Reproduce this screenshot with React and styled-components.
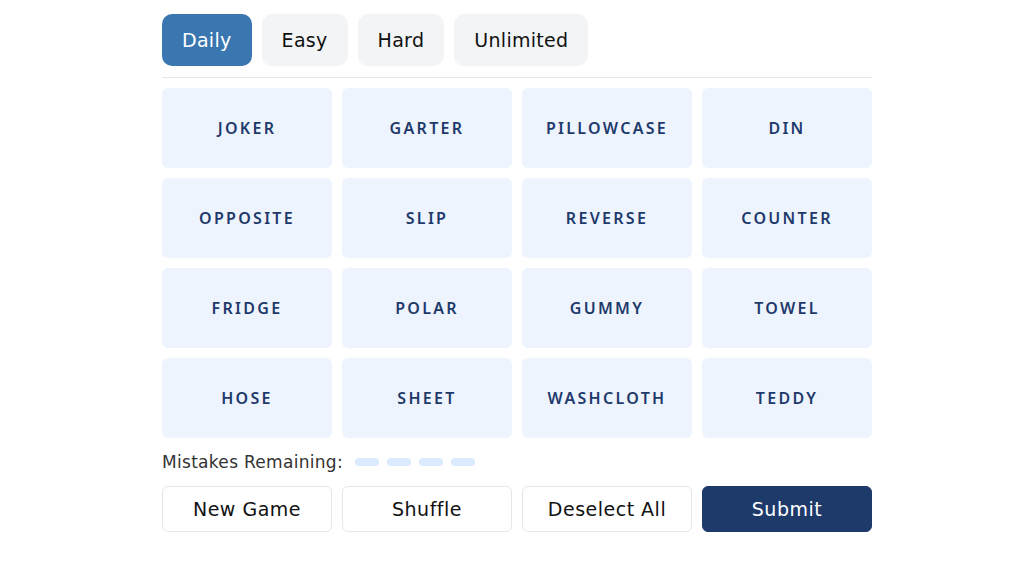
import React, { useState } from "react";
import styled, { createGlobalStyle } from "styled-components";

const GlobalStyle = createGlobalStyle`
  html, body {
    margin: 0;
    padding: 0;
    background: #ffffff;
  }
  body {
    font-family: "DejaVu Sans", "Noto Sans", sans-serif;
  }
`;

const Page = styled.div`
  width: 710px;
  margin-left: calc(50% - 352.5px);
  padding-top: 14px;
`;

const Tabs = styled.div`
  display: flex;
  gap: 10px;
  padding-bottom: 11px;
  border-bottom: 1px solid #e5e7eb;
`;

const Tab = styled.button`
  height: 52px;
  padding: 0 20px;
  border: none;
  border-radius: 10px;
  font-family: inherit;
  font-size: 19px;
  font-weight: 400;
  letter-spacing: 0.3px;
  cursor: pointer;
  background: ${(p) => (p.$active ? "#3a76af" : "#f3f4f6")};
  color: ${(p) => (p.$active ? "#ffffff" : "#111111")};
`;

const Grid = styled.div`
  display: grid;
  grid-template-columns: repeat(4, 170px);
  grid-auto-rows: 80px;
  gap: 10px;
  margin-top: 10px;
`;

const Cell = styled.button`
  border: none;
  border-radius: 6px;
  background: ${(p) => (p.$selected ? "#1e3a6b" : "#eef4fe")};
  color: ${(p) => (p.$selected ? "#ffffff" : "#1e3a6b")};
  font-family: "Noto Sans", sans-serif;
  font-size: 16px;
  font-weight: 600;
  letter-spacing: 2.3px;
  text-transform: uppercase;
  cursor: pointer;
`;

const Mistakes = styled.div`
  display: flex;
  align-items: center;
  gap: 8px;
  margin-top: 14px;
  height: 20px;
  font-size: 17px;
  letter-spacing: 0.3px;
  color: #333333;
`;

const Dots = styled.div`
  display: flex;
  gap: 8px;
  margin-left: 4px;
`;

const Dot = styled.span`
  width: 24px;
  height: 8px;
  border-radius: 4px;
  background: #dbeafe;
`;

const Actions = styled.div`
  display: grid;
  grid-template-columns: repeat(4, 170px);
  gap: 10px;
  margin-top: 14px;
`;

const ActionButton = styled.button`
  height: 46px;
  border-radius: 6px;
  border: 1px solid ${(p) => (p.$primary ? "#1e3a6b" : "#e5e7eb")};
  background: ${(p) => (p.$primary ? "#1e3a6b" : "#ffffff")};
  color: ${(p) => (p.$primary ? "#ffffff" : "#111111")};
  font-family: inherit;
  font-size: 19px;
  font-weight: 400;
  letter-spacing: 0.5px;
  cursor: pointer;
`;

const modes = ["Daily", "Easy", "Hard", "Unlimited"];

const words = [
  "Joker", "Garter", "Pillowcase", "Din",
  "Opposite", "Slip", "Reverse", "Counter",
  "Fridge", "Polar", "Gummy", "Towel",
  "Hose", "Sheet", "Washcloth", "Teddy",
];

export default function App() {
  const [mode, setMode] = useState("Daily");
  const [selected, setSelected] = useState([]);

  const toggle = (w) =>
    setSelected((s) =>
      s.includes(w) ? s.filter((x) => x !== w) : s.length < 4 ? [...s, w] : s
    );

  return (
    <>
      <GlobalStyle />
      <Page>
        <Tabs>
          {modes.map((m) => (
            <Tab key={m} $active={m === mode} onClick={() => setMode(m)}>
              {m}
            </Tab>
          ))}
        </Tabs>
        <Grid>
          {words.map((w) => (
            <Cell key={w} $selected={selected.includes(w)} onClick={() => toggle(w)}>
              {w}
            </Cell>
          ))}
        </Grid>
        <Mistakes>
          Mistakes Remaining:
          <Dots>
            {[0, 1, 2, 3].map((i) => (
              <Dot key={i} />
            ))}
          </Dots>
        </Mistakes>
        <Actions>
          <ActionButton>New Game</ActionButton>
          <ActionButton>Shuffle</ActionButton>
          <ActionButton onClick={() => setSelected([])}>Deselect All</ActionButton>
          <ActionButton $primary>Submit</ActionButton>
        </Actions>
      </Page>
    </>
  );
}
